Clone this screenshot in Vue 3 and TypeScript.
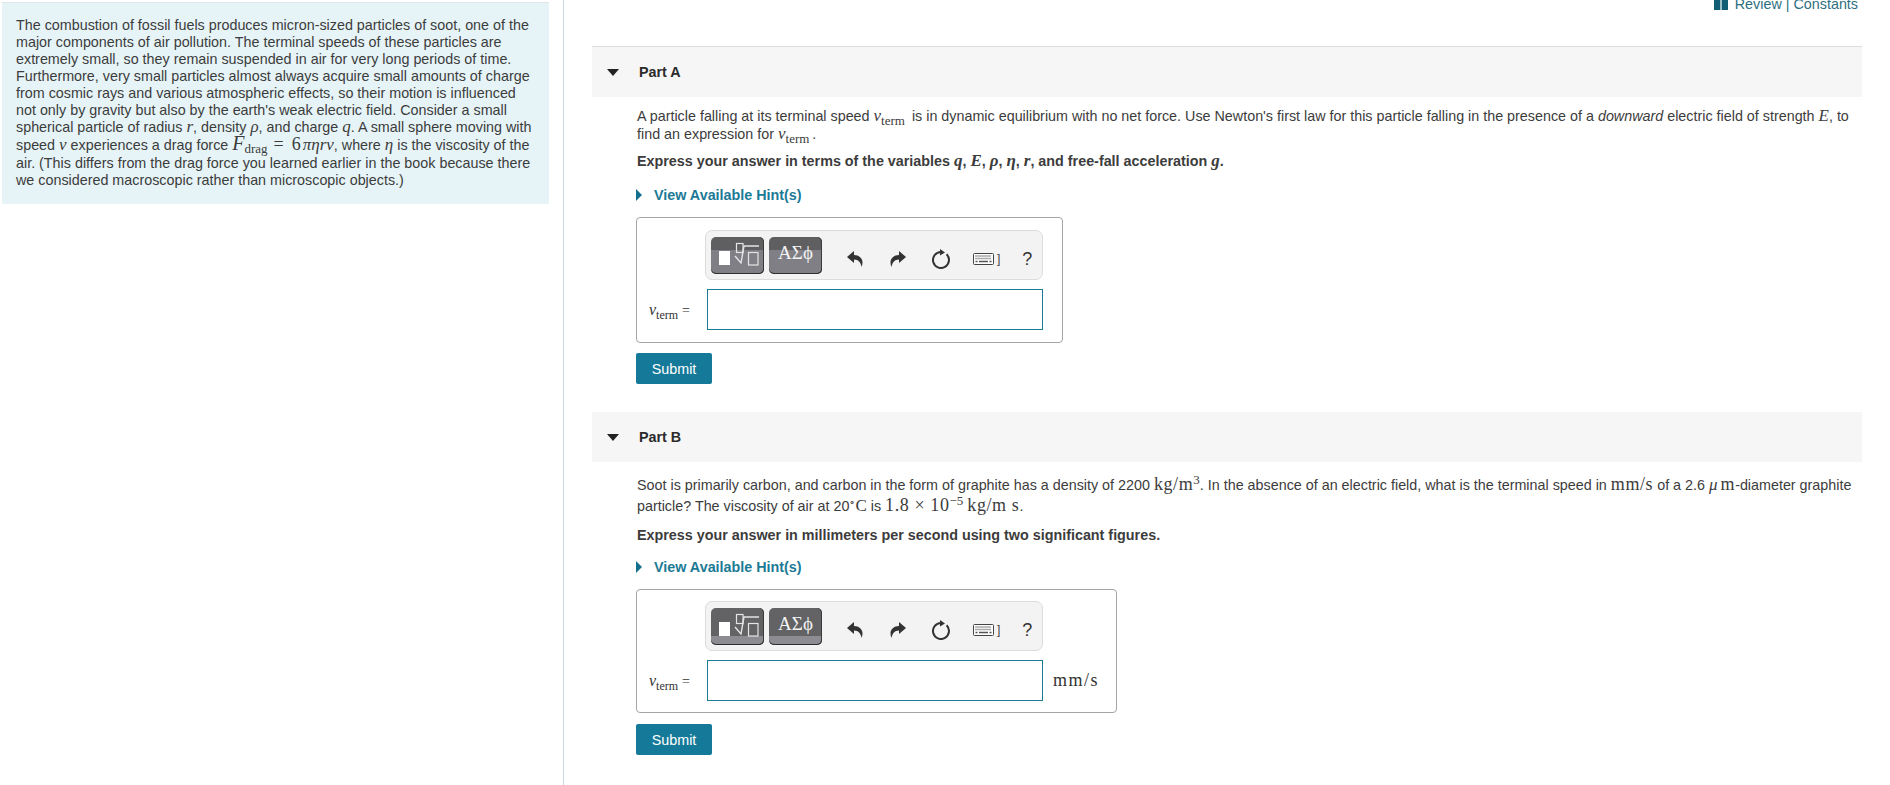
<template>
  <div class="page">
    <aside class="intro-col">
      <div class="intro">
        The combustion of fossil fuels produces micron-sized particles of soot, one of the<br />
        major components of air pollution. The terminal speeds of these particles are<br />
        extremely small, so they remain suspended in air for very long periods of time.<br />
        Furthermore, very small particles almost always acquire small amounts of charge<br />
        from cosmic rays and various atmospheric effects, so their motion is influenced<br />
        not only by gravity but also by the earth's weak electric field. Consider a small<br />
        spherical particle of radius <i class="mi">r</i>, density <i class="mi">ρ</i>, and charge <i class="mi">q</i>. A small sphere moving with<br />
        speed <i class="mi">v</i> experiences a drag force <span class="eq"><i class="mi big">F</i><sub>drag</sub> <span class="mn">=</span> <span class="mn">6</span><i class="mi">πηrv</i></span>, where <i class="mi">η</i> is the viscosity of the<br />
        air. (This differs from the drag force you learned earlier in the book because there<br />
        we considered macroscopic rather than microscopic objects.)
      </div>
    </aside>

    <main class="content">
      <div class="top-links">
        <svg class="book" viewBox="0 0 14 11" width="14" height="11"><path fill="#115e75" d="M0 0h6.400v11H0zM7.600 0H14v11H7.600z" /></svg>
        <a>Review</a><span class="sep">|</span><a>Constants</a>
      </div>

      <section v-for="part in parts" :key="part.id" class="part" :class="'part-' + part.id">
        <header class="part-head">
          <span class="caret"></span>
          <h3>Part {{ part.id }}</h3>
        </header>

        <div class="part-body">
          <p v-if="part.id === 'A'" class="question">
            A particle falling at its terminal speed <i class="mi">v</i><sub>term</sub> is in dynamic equilibrium with no net force. Use Newton's first law for this particle falling in the presence of a <em>downward</em> electric field of strength <i class="mi">E</i>, to<br />
            find an expression for <i class="mi">v</i><sub>term</sub>.
          </p>
          <p v-else class="question">
            Soot is primarily carbon, and carbon in the form of graphite has a density of 2200 <span class="mn unit-text">kg/m</span><sup>3</sup>. In the absence of an electric field, what is the terminal speed in <span class="mn unit-text">mm/s</span> of a 2.6 <i class="mi micro">μ</i><span class="mn unit-text">m</span>-diameter graphite<br />
            particle? The viscosity of air at 20<sup class="deg">∘</sup><span class="mn">C</span> is <span class="mn unit-text">1.8 × 10</span><sup>−5</sup> <span class="mn unit-text">kg/m s</span>.
          </p>

          <p v-if="part.id === 'A'" class="instruction">
            Express your answer in terms of the variables <i class="mi">q</i>, <i class="mi">E</i>, <i class="mi">ρ</i>, <i class="mi">η</i>, <i class="mi">r</i>, and free-fall acceleration <i class="mi">g</i>.
          </p>
          <p v-else class="instruction">Express your answer in millimeters per second using two significant figures.</p>

          <a class="hint"><span class="hint-caret"></span>View Available Hint(s)</a>

          <div class="answer-box">
            <div class="toolbar">
              <button class="tool-btn">
                <svg viewBox="0 0 53 37" width="53" height="37">
                  <rect x="8" y="14" width="11" height="14" fill="#fff" />
                  <g fill="none" stroke="#e4e4e6" stroke-width="1.200">
                    <rect x="25.500" y="6.500" width="6.500" height="9" />
                    <path d="M24 19l6 7 3-17h15" stroke-width="1.400" />
                    <rect x="37.500" y="15.500" width="9.500" height="12.500" />
                  </g>
                </svg>
              </button>
              <button class="tool-btn greek">ΑΣϕ</button>
              <svg class="act undo" viewBox="0 0 16 16" width="16" height="16"><path d="M0 6L7 0V4C12 4 15.500 7.500 15.500 11C15.500 13 15 15 14.500 16C14 12 11.500 8.500 7 8.500V12Z" fill="#333" /></svg>
              <svg class="act redo" viewBox="0 0 16 16" width="16" height="16"><path d="M16 6L9 0V4C4 4 .5 7.500 .5 11C.5 13 1 15 1.500 16C2 12 4.500 8.500 9 8.500V12Z" fill="#333" /></svg>
              <svg class="act reset" viewBox="0 0 20 20" width="20" height="20">
                <path d="M10 3A8 8 0 1 0 15.600 5.300" fill="none" stroke="#333" stroke-width="2" />
                <path d="M9 0l5 3.400-5 3.100z" fill="#333" />
              </svg>
              <svg class="act kbd" viewBox="0 0 21 12" width="21" height="12">
                <rect x=".5" y=".5" width="20" height="11" rx="1" fill="#fff" stroke="#444" />
                <path d="M2.500 3h16M2.500 5.500h16" stroke="#555" stroke-width="1.300" stroke-dasharray="1 1" />
                <path d="M2.500 8.500h2M6 8.500h9M16.500 8.500h2" stroke="#555" stroke-width="1.300" />
              </svg>
              <span class="act bracket">]</span>
              <span class="act help">?</span>
            </div>

            <div class="answer-row">
              <label class="var"><i class="mi">v</i><sub>term</sub> <span class="mn">=</span></label>
              <input class="answer-input" type="text" />
              <span v-if="part.unit" class="unit">{{ part.unit }}</span>
            </div>
          </div>

          <button class="submit">Submit</button>
        </div>
      </section>
    </main>
  </div>
</template>

<script setup lang="ts">
interface Part {
  id: string
  unit: string
}

const parts: Part[] = [
  { id: 'A', unit: '' },
  { id: 'B', unit: 'mm/s' }
]
</script>

<style>
html,
body {
  margin: 0;
  background: #fff;
  overflow: hidden;
}
</style>

<style scoped>
.page {
  display: flex;
  height: 785px;
  overflow: hidden;
  font-family: "Liberation Sans", Arial, sans-serif;
  font-size: 14.33px;
  color: #3c3c3c;
  background: #fff;
}

.intro-col {
  width: 564px;
  flex: none;
  box-sizing: border-box;
  padding: 2px 14px 0 2px;
  border-right: 1px solid #cfd6de;
}

.intro {
  box-sizing: border-box;
  height: 202px;
  padding: 14px 14px 0;
  line-height: 17px;
  white-space: nowrap;
  background: #e6f4f7;
  border-top: 1px solid #dfe6e8;
}

.eq {
  display: inline-block;
  line-height: 19px;
}

.eq sub {
  vertical-align: -3px;
}

.mi {
  font-family: "Liberation Serif", serif;
  font-style: italic;
  font-size: 17px;
  line-height: 0;
}

.big {
  font-size: 20px;
}

.micro {
  margin-right: 3px;
}

.mn {
  font-family: "Liberation Serif", serif;
  font-size: 17px;
  line-height: 0;
}

.unit-text {
  font-size: 18px;
  letter-spacing: .6px;
}

.eq .mn {
  margin: 0 2px;
  font-size: 18px;
}

.eq .mi + .mn {
  margin-left: 0;
}

sub,
sup {
  font-family: "Liberation Serif", serif;
  font-size: 13px;
  line-height: 0;
}

.deg {
  font-size: 10px;
}

.content {
  flex: 1;
  min-width: 0;
  padding: 0 28px 0 28px;
}

.top-links {
  display: flex;
  align-items: center;
  justify-content: flex-end;
  height: 14px;
  margin: -3px 0 0;
  padding-right: 4px;
  color: #2e6f82;
  font-size: 14.33px;
}

.book {
  margin-right: 7px;
}

.sep {
  margin: 0 4px;
}

.part-A {
  margin-top: 35px;
}

.part-B {
  margin-top: 28px;
}

.part-head {
  display: flex;
  align-items: center;
  height: 50px;
  background: #f6f6f6;
}

.part-A .part-head {
  height: 51px;
  box-sizing: border-box;
  border-top: 1px solid #dcdcdc;
}

.caret {
  width: 0;
  height: 0;
  margin-left: 15px;
  border-left: 6px solid transparent;
  border-right: 6px solid transparent;
  border-top: 7px solid #222;
}

.part-head h3 {
  margin: 0 0 0 20px;
  font-size: 14.33px;
  font-weight: bold;
  color: #2b2b2b;
}

.part-body {
  padding-left: 44px;
}

.question {
  margin: 0;
  padding: 10px 0 0 1px;
  line-height: 18px;
  white-space: nowrap;
}

.question sub {
  margin-right: 3px;
}

.part-B .question {
  padding-top: 13px;
  line-height: 21px;
}

.instruction {
  margin: 9px 0 0;
  padding-left: 1px;
  font-weight: bold;
  line-height: 18px;
  white-space: nowrap;
}

.hint {
  display: flex;
  align-items: center;
  margin-top: 16px;
  height: 18px;
  font-weight: bold;
  color: #1c7a96;
}

.part-B .hint {
  margin-top: 14px;
}

.hint-caret {
  width: 0;
  height: 0;
  margin-right: 12px;
  border-top: 6px solid transparent;
  border-bottom: 6px solid transparent;
  border-left: 6px solid #14708c;
}

.answer-box {
  box-sizing: border-box;
  width: fit-content;
  margin: 13px 0 0;
  padding: 12px 19px 12px 12px;
  border: 1px solid #a5a5a5;
  border-radius: 4px;
}

.part-B .answer-box {
  margin-top: 13px;
  padding-top: 11px;
  padding-bottom: 11px;
  padding-right: 17px;
}

.toolbar {
  display: flex;
  align-items: center;
  box-sizing: border-box;
  width: 338px;
  height: 50px;
  margin-left: 56px;
  padding-left: 5px;
  background: #f3f3f3;
  border: 1px solid #dcdcdc;
  border-radius: 7px;
}

.tool-btn {
  display: block;
  flex: none;
  width: 53px;
  height: 37px;
  margin-right: 5px;
  padding: 0;
  border: none;
  border-radius: 5px;
  background: linear-gradient(#5f5f61 0 13px, #7f7f85 13px);
  box-shadow: inset 0 -1px 0 #2e2e2e, inset -1px 0 0 #3a3a3a;
  color: #f2f2f2;
  font-family: "Liberation Serif", serif;
  font-size: 19px;
  line-height: 31px;
}

.tool-btn svg {
  display: block;
}

.part-B .tool-btn {
  background: linear-gradient(#636365 0 28px, #8c8c92 28px);
}

.greek {
  text-align: center;
  padding-bottom: 6px;
}

.act {
  flex: none;
  margin-top: 8px;
}

.undo {
  margin-left: 20px;
}

.redo {
  margin-left: 27px;
}

.reset {
  margin-left: 25px;
}

.kbd {
  margin-left: 22px;
}

.bracket {
  margin-left: 3px;
  font-size: 12px;
  color: #444;
}

.help {
  margin-left: 22px;
  font-size: 18px;
  color: #333;
}

.answer-row {
  display: flex;
  align-items: center;
  margin-top: 9px;
}

.var {
  box-sizing: border-box;
  width: 57px;
  flex: none;
  color: #333;
  white-space: nowrap;
}

.var .mi {
  font-size: 16px;
}

.var sub {
  font-size: 12px;
}

.var .mn {
  font-size: 14px;
}

.answer-input {
  box-sizing: border-box;
  width: 336px;
  height: 41px;
  margin: 0 0 0 1px;
  padding: 0;
  flex: none;
  border: 1px solid #1c7a96;
  outline: 0;
  background: #fff;
}

.unit {
  margin: 0 0 0 10px;
  font-family: "Liberation Serif", serif;
  font-size: 18px;
  letter-spacing: 1.500px;
  color: #333;
}

.submit {
  display: block;
  width: 76px;
  height: 31px;
  margin: 10px 0 0 0;
  padding: 0;
  border: none;
  border-radius: 2px;
  background: #157a9a;
  color: #fff;
  font-family: "Liberation Sans", Arial, sans-serif;
  font-size: 14.33px;
}

.part-B .submit {
  margin-top: 11px;
}
</style>
